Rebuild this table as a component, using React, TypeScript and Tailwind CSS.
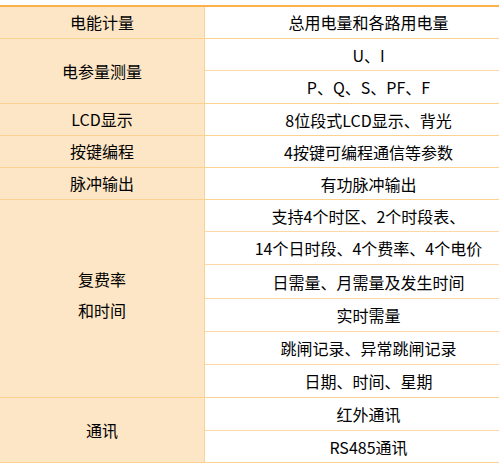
import { type FC } from "react";

interface Group {
  label: string[];
  items: string[];
  heights: number[];
}

const groups: Group[] = [
  { label: ["电能计量"], items: ["总用电量和各路用电量"], heights: [30] },
  { label: ["电参量测量"], items: ["U、I", "P、Q、S、PF、F"], heights: [32, 33] },
  { label: ["LCD显示"], items: ["8位段式LCD显示、背光"], heights: [32] },
  { label: ["按键编程"], items: ["4按键可编程通信等参数"], heights: [32] },
  { label: ["脉冲输出"], items: ["有功脉冲输出"], heights: [32] },
  {
    label: ["复费率", "和时间"],
    items: [
      "支持4个时区、2个时段表、",
      "14个日时段、4个费率、4个电价",
      "日需量、月需量及发生时间",
      "实时需量",
      "跳闸记录、异常跳闸记录",
      "日期、时间、星期",
    ],
    heights: [32, 33, 34, 33, 33, 33],
  },
  { label: ["通讯"], items: ["红外通讯", "RS485通讯"], heights: [33, 32] },
];

const Row: FC<{ group: Group }> = ({ group }) => (
  <div className="flex border-b border-[#fcd293]">
    <div
      className={
        "w-[205px] shrink-0 bg-[#fde6c6] border-r border-[#fcd293] flex flex-col items-center justify-center leading-[31px] " +
        (group.label.length > 1 ? "pb-[7px]" : "")
      }
    >
      {group.label.map((l) => (
        <div key={l}>{l}</div>
      ))}
    </div>
    <div className="flex-1 flex flex-col">
      {group.items.map((item, i) => (
        <div
          key={item}
          style={{ height: group.heights[i] - (i < group.items.length - 1 ? 0 : 1) }}
          className={
            "flex items-center justify-center pl-[33px] whitespace-nowrap " +
            (i < group.items.length - 1 ? "border-b border-[#fcd9a4]" : "")
          }
        >
          {item}
        </div>
      ))}
    </div>
  </div>
);

const App: FC = () => (
  <div
    className="w-[502px] h-[468px] bg-white pt-[5px] text-[16px] text-black"
    style={{ fontFamily: '"Noto Sans CJK SC", "Noto Sans", sans-serif' }}
  >
    <div className="w-[499px] border-t-2 border-[#fcb24c]">
      {groups.map((g) => (
        <Row key={g.label.join("")} group={g} />
      ))}
    </div>
  </div>
);

export default App;
